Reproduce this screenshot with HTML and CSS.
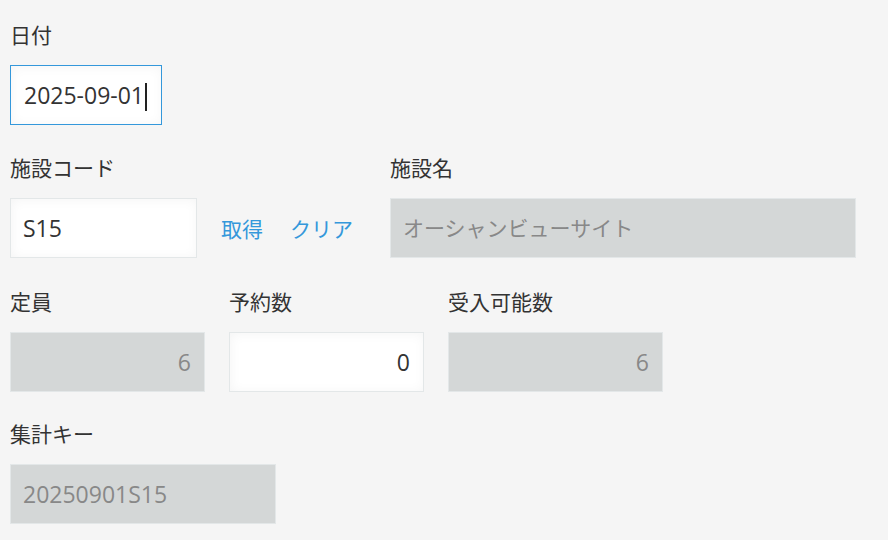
FILE: index.html
```html
<!DOCTYPE html>
<html lang="ja">
<head>
<meta charset="utf-8">
<title>施設予約</title>
<link rel="stylesheet" href="styles.css">
</head>
<body>
<div class="form">
    <div class="row">
        <div class="field w-date">
            <div class="label">日付</div>
            <div class="input focus">2025-09-01<span class="caret"></span></div>
        </div>
    </div>

    <div class="row">
        <div class="field w-code">
            <div class="label">施設コード</div>
            <div class="input">S15</div>
        </div>
        <div class="actions">
            <a class="link" href="#">取得</a>
            <a class="link" href="#">クリア</a>
        </div>
        <div class="field w-name">
            <div class="label">施設名</div>
            <div class="input readonly jp">オーシャンビューサイト</div>
        </div>
    </div>

    <div class="row row-num">
        <div class="field w-num">
            <div class="label">定員</div>
            <div class="input readonly num">6</div>
        </div>
        <div class="field w-num">
            <div class="label">予約数</div>
            <div class="input num">0</div>
        </div>
        <div class="field w-avail">
            <div class="label">受入可能数</div>
            <div class="input readonly num">6</div>
        </div>
    </div>

    <div class="row">
        <div class="field w-key">
            <div class="label">集計キー</div>
            <div class="input readonly">20250901S15</div>
        </div>
    </div>
</div>
</body>
</html>
```

FILE: styles.css
```css
body
{
    margin: 0;
    background: #f5f5f5;
    color: #333;
    font-family: "Open Sans", "Noto Sans CJK JP", sans-serif;
    font-size: 21px;
}
.form
{
    padding: 20px 10px 0;
    display: flex;
    flex-direction: column;
    gap: 28px;
}
.row
{
    display: flex;
    gap: 24px;
}
.row-num
{
    margin-top: 1px;
    margin-bottom: -1px;
}
.label
{
    line-height: 30px;
    height: 30px;
    margin-bottom: 15px;
    white-space: nowrap;
}
.input
{
    box-sizing: border-box;
    height: 60px;
    line-height: 58px;
    padding: 0 13px 0 12px;
    background: #fff;
    border: 1px solid #e3e7e8;
    box-shadow: 1px 1px 12px #f5f5f5 inset;
    font-size: 23px;
    white-space: nowrap;
    overflow: hidden;
}
.input.jp
{
    font-size: 21px;
}
.input.focus
{
    border-color: #3498db;
    padding-left: 13px;
}
.input.readonly
{
    background: #d4d7d7;
    box-shadow: none;
    color: #888;
}
.input.num
{
    text-align: right;
}
.caret
{
    display: inline-block;
    width: 2px;
    height: 28px;
    margin-left: 1px;
    background: #222;
    vertical-align: -7px;
}
.actions
{
    margin-top: 45px;
    height: 60px;
    display: flex;
    align-items: center;
    gap: 27px;
    padding-right: 13px;
}
.link
{
    color: #3498db;
    text-decoration: none;
}
.w-date { width: 152px; }
.w-code { width: 187px; }
.w-name { width: 466px; }
.w-num { width: 195px; }
.w-avail { width: 215px; }
.w-key { width: 266px; }
```
